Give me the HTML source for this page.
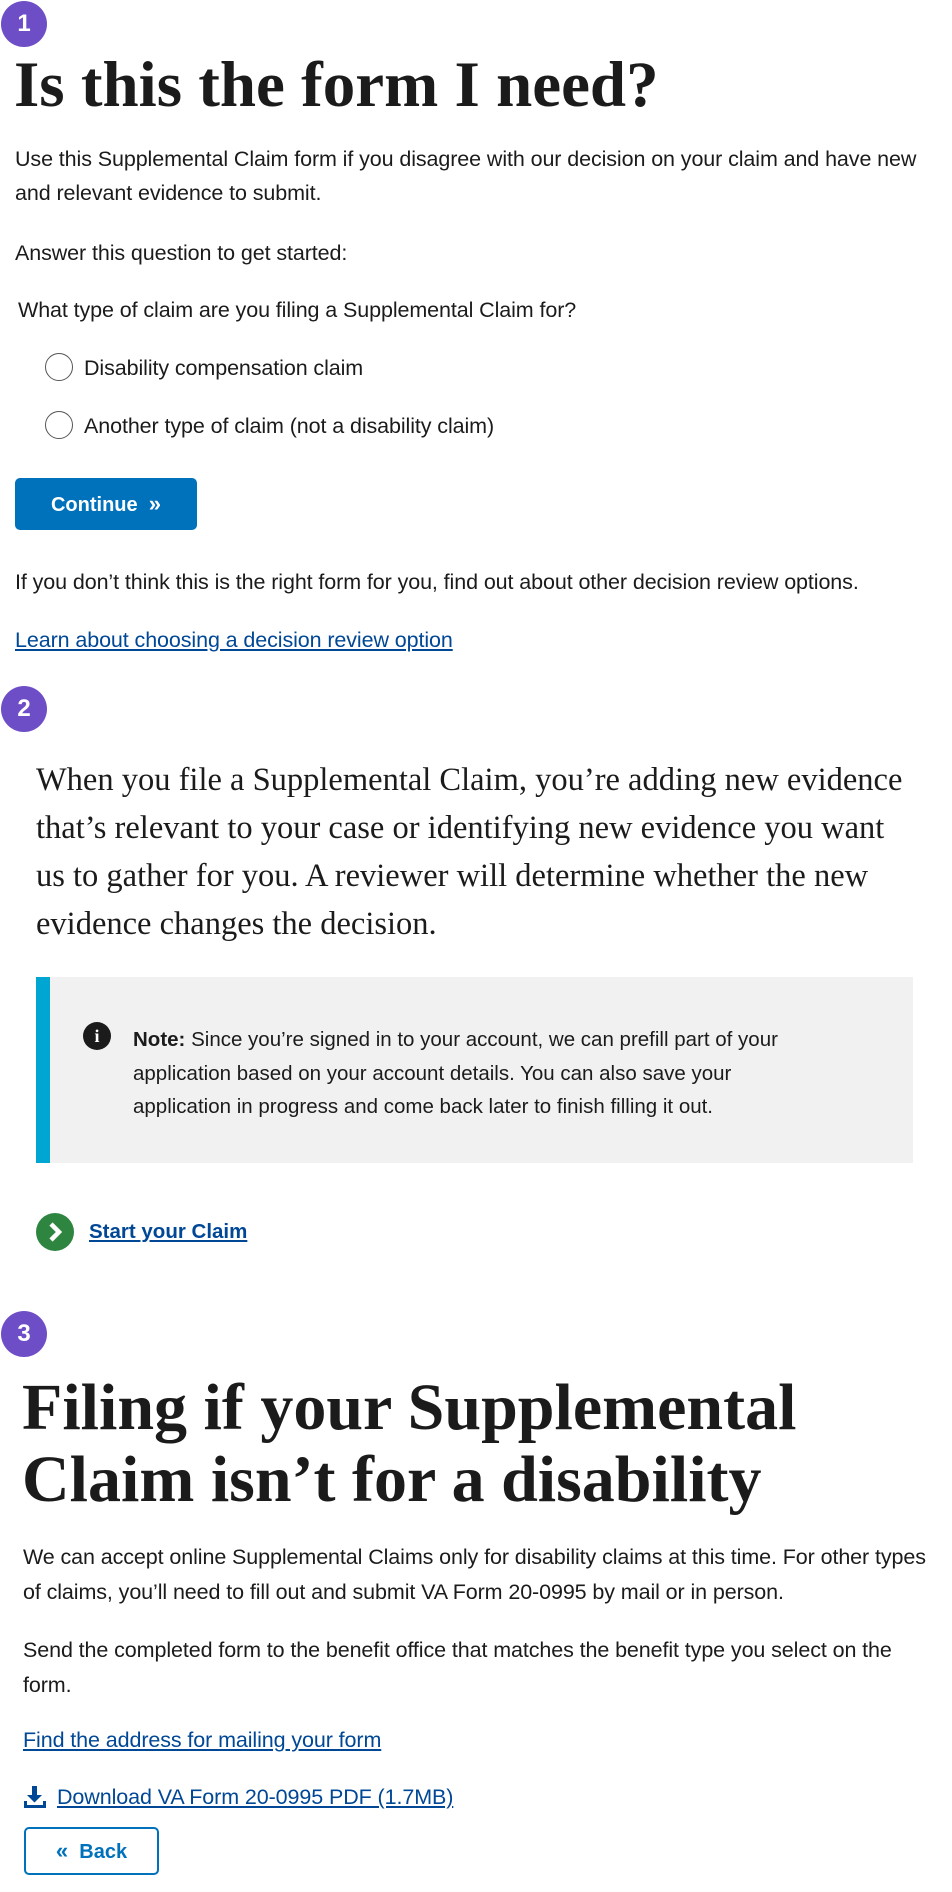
<!DOCTYPE html>
<html><head><meta charset="utf-8"><style>
body{margin:0;width:952px;height:1892px;position:relative;background:#fff;color:#1b1b1b;font-family:"Liberation Sans",sans-serif;overflow:hidden}
.a{position:absolute;white-space:nowrap}
.badge{position:absolute;width:46px;height:46px;border-radius:50%;background:#6e4ec7;color:#fff;font:bold 24px/46px "Liberation Sans",sans-serif;text-align:center;left:1px}
.t{font-size:21.5px;line-height:34px;letter-spacing:-0.1px}
h1,h2{margin:0;font-family:"Liberation Serif",serif;font-weight:bold}
a{color:#004795;text-decoration:underline}
.radio{position:absolute;width:26px;height:26px;border:1.5px solid #555;border-radius:50%;left:45px;background:#fff}
</style></head><body>
<div class="badge" style="top:1px">1</div>
<h1 class="a" style="left:14px;top:50px;font-size:65px;line-height:70px">Is this the form I need?</h1>
<div class="a t" style="left:15px;top:142px">Use this Supplemental Claim form if you disagree with our decision on your claim and have new<br>and relevant evidence to submit.</div>
<div class="a t" style="left:15px;top:236px">Answer this question to get started:</div>
<div class="a t" style="left:18px;top:293px">What type of claim are you filing a Supplemental Claim for?</div>
<div class="radio" style="top:353px"></div>
<div class="a t" style="left:84px;top:351px">Disability compensation claim</div>
<div class="radio" style="top:411px"></div>
<div class="a t" style="left:84px;top:409px">Another type of claim (not a disability claim)</div>
<div class="a" style="left:15px;top:478px;width:182px;height:52px;background:#0071bb;border-radius:5px;color:#fff;font-weight:bold;font-size:20px;line-height:52px;text-align:center">Continue&nbsp; <span style="font-size:22px">»</span></div>
<div class="a t" style="left:15px;top:565px">If you don’t think this is the right form for you, find out about other decision review options.</div>
<div class="a t" style="left:15px;top:623px"><a>Learn about choosing a decision review option</a></div>
<div class="badge" style="top:686px">2</div>
<div class="a" style="left:36px;top:756px;font-family:'Liberation Serif',serif;font-size:32.5px;line-height:48px">When you file a Supplemental Claim, you’re adding new evidence<br>that’s relevant to your case or identifying new evidence you want<br>us to gather for you. A reviewer will determine whether the new<br>evidence changes the decision.</div>
<div class="a" style="left:36px;top:977px;width:877px;height:186px;background:#f1f1f1;border-left:14px solid #00a6d2;box-sizing:border-box"></div>
<div class="a" style="left:83px;top:1022px;width:28px;height:28px;border-radius:50%;background:#1b1b1b;color:#fff;font:bold 18px/28px 'Liberation Serif',serif;text-align:center">i</div>
<div class="a" style="left:133px;top:1023px;font-size:20.5px;line-height:33.5px">
<b>Note:</b> Since you’re signed in to your account, we can prefill part of your<br>application based on your account details. You can also save your<br>application in progress and come back later to finish filling it out.</div>
<div class="a" style="left:36px;top:1213px;width:38px;height:38px;border-radius:50%;background:#2e8540"><svg width="38" height="38"><path d="M15 11l8 8-8 8" stroke="#fff" stroke-width="4.5" fill="none"/></svg></div>
<div class="a" style="left:89px;top:1215px;font-size:20.5px;line-height:34px;font-weight:bold"><a>Start your Claim</a></div>
<div class="badge" style="top:1311px">3</div>
<h2 class="a" style="left:22px;top:1372px;font-size:66px;line-height:72px">Filing if your Supplemental<br>Claim isn’t for a disability</h2>
<div class="a t" style="left:23px;top:1540px;line-height:35px">We can accept online Supplemental Claims only for disability claims at this time. For other types<br>of claims, you’ll need to fill out and submit VA Form 20-0995 by mail or in person.</div>
<div class="a t" style="left:23px;top:1633px;line-height:35px">Send the completed form to the benefit office that matches the benefit type you select on the<br>form.</div>
<div class="a t" style="left:23px;top:1723px"><a>Find the address for mailing your form</a></div>
<svg class="a" style="left:23px;top:1785px" width="24" height="24"><path d="M9 1h5v9h5l-7.5 7.5L4 10h5z" fill="#004795"/><path d="M1 16v7h22v-7h-3v4H4v-4z" fill="#004795"/></svg>
<div class="a t" style="left:57px;top:1780px"><a>Download VA Form 20-0995 PDF (1.7MB)</a></div>
<div class="a" style="left:24px;top:1827px;width:135px;height:48px;border:2.5px solid #0071bb;border-radius:5px;box-sizing:border-box;color:#0071bb;font-weight:bold;font-size:20px;line-height:43px;text-align:center"><span style="font-size:22px">«</span>&nbsp; Back</div>
</body></html>
